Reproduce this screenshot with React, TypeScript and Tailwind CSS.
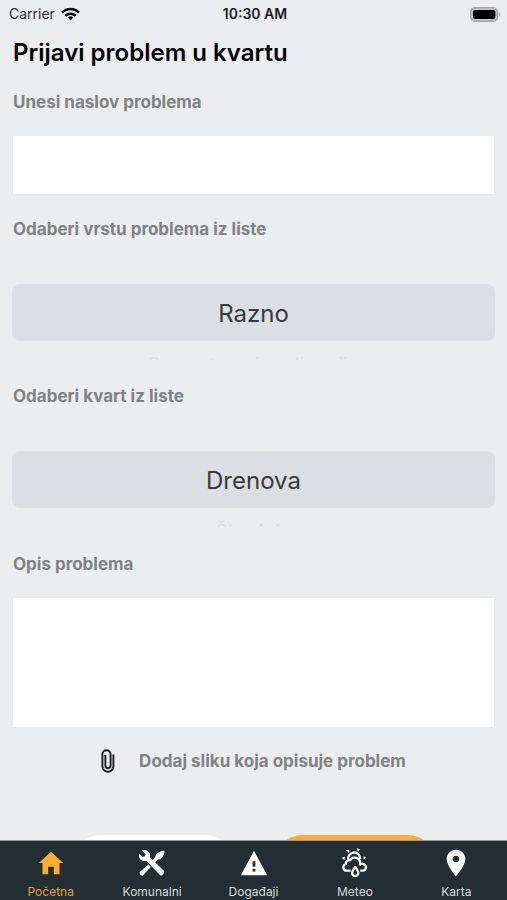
import { useState, type ReactNode } from "react";
import { IoMdHome, IoMdWarning } from "react-icons/io";
import { MdLocationOn } from "react-icons/md";

function WifiIcon() {
  return (
    <svg viewBox="0 0 18 13" className="h-[14px] w-[19px]" aria-hidden="true" fill="none" stroke="#000" strokeWidth="2.3">
      <path d="M1 5.1a11.4 11.4 0 0 1 16 0" />
      <path d="M4 8.2a7.2 7.2 0 0 1 10 0" />
      <path d="M9 12.6 6.3 9.9a3.9 3.9 0 0 1 5.4 0z" fill="#000" stroke="none" />
    </svg>
  );
}

function BatteryIcon() {
  return (
    <svg viewBox="0 0 31 15" className="h-[15px] w-[31px]" aria-hidden="true">
      <rect x="0.8" y="0.8" width="26.6" height="13.4" rx="4" fill="#c4c6c8" stroke="#a3a5a7" strokeWidth="1.4" />
      <rect x="3" y="3" width="22.4" height="9" rx="2" fill="#000" />
      <path d="M28.7 5.2c2 .8 2 3.8 0 4.6z" fill="#a3a5a7" />
    </svg>
  );
}

function PaperclipIcon() {
  return (
    <svg viewBox="0 0 14 24" className="h-6 w-[14px]" aria-hidden="true" fill="none" stroke="#1d1e1f" strokeWidth="1.9">
      <path d="M12.400 5.500v11.700a5.500 5.500 0 0 1-11 0V5.300a4.100 4.100 0 0 1 8.200 0v11.300a2.600 2.600 0 0 1-5.200 0V6" />
    </svg>
  );
}

function ToolsIcon() {
  return (
    <svg viewBox="0 0 28 28" className="size-7" aria-hidden="true" fill="currentColor">
      <path d="M10.300 15.600 2 22.700a1.500 1.500 0 0 0-.1 2.200l1.300 1.300a1.500 1.500 0 0 0 2.200-.1l7.400-8z" />
      <path d="M14.300 11.500l3-3.200c0-1.600.5-2.800 1.700-3.900C20.700 2.900 23 1.900 25.400 1.400L26.600 2.600C26.300 5 25.300 7.400 23.700 9c-1.100 1.100-2.400 1.600-3.900 1.700l-3.200 3z" />
      <path d="M3.900 1.600 7.400 5 6.900 7.300 4.600 7.900 1.200 4.500C.5 7.100 1.100 9.300 2.700 10.700c1.600 1.400 3.700 1.700 5.700 1L21.800 25.900a1.700 1.700 0 0 0 2.400 0l1.700-1.700a1.700 1.700 0 0 0 0-2.400L11.800 8.300c.7-2 .3-4.100-1.200-5.600C8.900 1.100 6.500.8 3.900 1.600z" />
    </svg>
  );
}

function WeatherIcon() {
  return (
    <svg viewBox="0 0 28 30" className="h-[30px] w-[28px]" aria-hidden="true" fill="none" stroke="currentColor" strokeWidth="2.3" strokeLinejoin="round">
      <path d="M7.600 12.800a6 6 0 1 1 11.500-1.600" />
      <path d="M9.600 22.700H5.900a3.400 3.400 0 0 1-.9-6.700c-.6-2.300 1.500-4.200 3.900-3.700a5.600 5.600 0 0 1 10.300 3c0 .5 0 .8-.1 1.200 1-.9 3.600-.8 4.900.6 1.900 2.200.9 5.600-2.100 5.600h-2.700" />
      <path d="M14.200 19c1.900 2.700 3.100 4.300 3.100 6a3.100 3.100 0 0 1-6.200 0c0-1.700 1.200-3.300 3.100-6z" />
      <g fill="currentColor" stroke="none">
        <path d="M4.900 2.200 8.400 1.700 8.100 5zM15.800.2l3.300 1.300-2.200 2.200zM.6 9.900l3.200-1.300-.2 3.500zM22.400 8.300l2.700 1.200-2.500 1.900z" />
      </g>
    </svg>
  );
}

type PickerProps = {
  id: string;
  label: string;
  options: string[];
};

function Picker({ id, label, options }: PickerProps) {
  const [value, setValue] = useState(options[0]);
  const next = options[options.indexOf(value) + 1] ?? "";
  return (
    <div>
      <label htmlFor={id} className="block px-px text-[17px] leading-6 font-bold text-[#818284]">
        {label}
      </label>
      <select
        id={id}
        value={value}
        onChange={(event) => setValue(event.target.value)}
        className="mt-[43px] block h-[57px] w-full appearance-none rounded-lg bg-[#dbdfe3] pt-0.5 text-center text-2xl text-[#37393b] [text-align-last:center]"
      >
        {options.map((option) => (
          <option key={option}>{option}</option>
        ))}
      </select>
      <div aria-hidden="true" className="mt-3 h-[7px] overflow-hidden text-center text-xl leading-6 text-[#dfe1e2]">
        {next}
      </div>
    </div>
  );
}

function Tab({ label, icon, active = false }: { label: string; icon: ReactNode; active?: boolean }) {
  return (
    <a
      href="#"
      aria-current={active ? "page" : undefined}
      className={`flex flex-1 flex-col items-center ${active ? "text-[#fbac35]" : "text-white"}`}
    >
      <span className="flex h-8 items-center">{icon}</span>
      <span className={`mt-[5px] text-xs leading-4 ${active ? "text-[#e39f36]" : "text-[#d8dcdd]"}`}>{label}</span>
    </a>
  );
}

export default function App() {
  return (
    <div className="flex h-screen flex-col bg-[#ecedef] font-['Inter','Liberation_Sans',sans-serif]">
      <header className="grid h-7 shrink-0 grid-cols-3 items-center pr-1.5 pl-[9px] text-sm leading-5">
        <span className="flex items-center gap-1.5 text-[#2c2d2e]">
          Carrier <WifiIcon />
        </span>
        <span className="text-center font-semibold text-[#1b1c1d]">10:30 AM</span>
        <span className="flex justify-end">
          <BatteryIcon />
        </span>
      </header>

      <main className="min-h-0 flex-1 overflow-hidden px-3">
        <h1 className="mt-[9px] px-px text-2xl leading-8 font-semibold text-black">Prijavi problem u kvartu</h1>

        <form onSubmit={(event) => event.preventDefault()}>
          <label htmlFor="title" className="mt-[21px] block px-px text-[17px] leading-6 font-bold text-[#818284]">
            Unesi naslov problema
          </label>
          <div className="mt-[22px] px-px">
            <input id="title" type="text" className="block h-[58px] w-full bg-white px-3 text-base" />
          </div>

          <div className="mt-[23px] flex flex-col gap-6">
            <Picker id="kind" label="Odaberi vrstu problema iz liste" options={["Razno", "Prometna signalizacija"]} />
            <Picker id="district" label="Odaberi kvart iz liste" options={["Drenova", "Škurinje"]} />
          </div>

          <label htmlFor="description" className="mt-[25px] block px-px text-[17px] leading-6 font-bold text-[#818284]">
            Opis problema
          </label>
          <div className="mt-[22px] px-px">
            <textarea id="description" className="block h-[129px] w-full resize-none bg-white p-3 text-base" />
          </div>

          <button type="button" className="mx-auto mt-[22px] flex items-center gap-6 text-[17px] leading-6 font-bold text-[#818284]">
            <PaperclipIcon />
            Dodaj sliku koja opisuje problem
          </button>

          <div className="mt-[62px] flex justify-center gap-11">
            <button type="button" className="h-[52px] w-[158px] rounded-full bg-white text-base">
              Odustani
            </button>
            <button type="submit" className="h-[52px] w-[158px] rounded-full bg-[#fbac35] text-base text-white">
              Pošalji
            </button>
          </div>
        </form>
      </main>

      <nav className="flex h-[60px] shrink-0 border-t border-[#92999b] bg-[#222e33] pt-1.5">
        <Tab label="Početna" active icon={<IoMdHome className="size-[30px]" />} />
        <Tab label="Komunalni" icon={<ToolsIcon />} />
        <Tab label="Događaji" icon={<IoMdWarning className="size-[30px]" />} />
        <Tab label="Meteo" icon={<WeatherIcon />} />
        <Tab label="Karta" icon={<MdLocationOn className="size-8" />} />
      </nav>
    </div>
  );
}
